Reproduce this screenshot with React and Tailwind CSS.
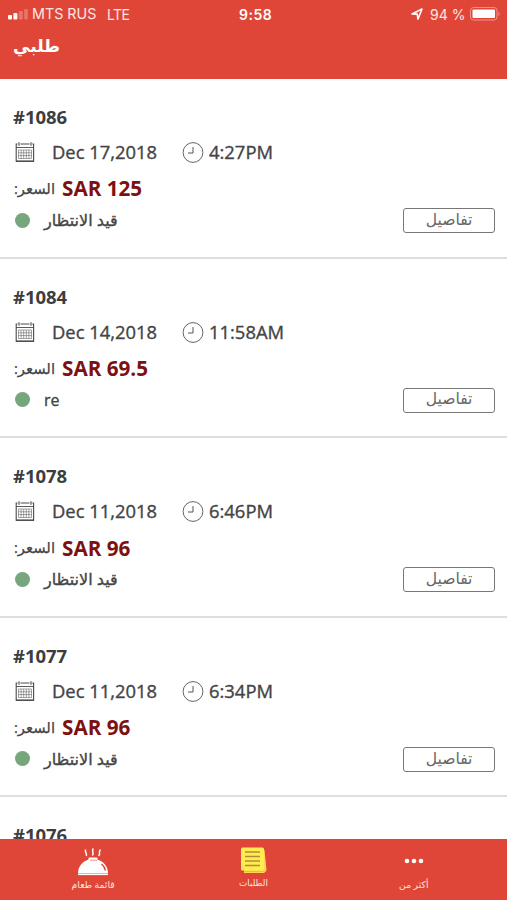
import React from "react";

const orders = [
  { id: "1086", date: "Dec 17,2018", time: "4:27PM", price: "125", status: "قيد الانتظار" },
  { id: "1084", date: "Dec 14,2018", time: "11:58AM", price: "69.5", status: "re" },
  { id: "1078", date: "Dec 11,2018", time: "6:46PM", price: "96", status: "قيد الانتظار" },
  { id: "1077", date: "Dec 11,2018", time: "6:34PM", price: "96", status: "قيد الانتظار" },
];

const CalendarIcon = () => (
  <svg className="h-5 w-5 shrink-0" viewBox="0 0 20 20" fill="none" stroke="#4a4a4a">
    <path d="M2.5 2H1.2v17.2h17.4V2h-1.3M5.500 2h9" strokeWidth="1.1" />
    <path d="M1 5.500h18" strokeWidth="0.9" />
    <path d="M4 0.300v3.400M16 0.300v3.400" strokeWidth="1.100" />
    <path
      d="M3.500 8h13v8.500h-13zM3.500 10.800h13M3.500 13.600h13M6.1 8v8.500M8.7 8v8.500M11.3 8v8.500M13.9 8v8.500"
      strokeWidth="0.5"
    />
    <path d="M1 19.200h18" strokeWidth="1.300" />
  </svg>
);

const ClockIcon = () => (
  <svg className="h-[22px] w-[22px] shrink-0" viewBox="0 0 22 22" fill="none" stroke="#555">
    <circle cx="11" cy="11.500" r="9.9" strokeWidth="0.9" />
    <path d="M11 6v6H6" strokeWidth="1" />
  </svg>
);

const StatusBar = () => (
  <div className="flex h-7 items-center px-2 font-['Inter','Liberation_Sans',sans-serif] text-[14px] text-[#fbe6e2]">
    <div className="flex w-[200px] items-center">
      <svg className="mt-px h-[11px] w-5" viewBox="0 0 20 11" fill="#fff">
        <rect x="0" y="6" width="4" height="4.5" rx="1" />
        <rect x="5.4" y="4" width="4" height="6.5" rx="1" />
        <rect x="10.8" y="2" width="4" height="8.5" rx="1" opacity="0.25" />
        <rect x="16.2" y="0" width="3.6" height="10.5" rx="1" opacity="0.25" />
      </svg>
      <span className="ml-1 w-[75px] text-[14.3px] whitespace-nowrap">MTS RUS</span>
      <span className="tracking-[-0.6px]">LTE</span>
    </div>
    <div className="flex-1 pl-[31px] font-semibold tracking-[0.5px] text-white">9:58</div>
    <svg className="mr-[7px] h-3 w-3" viewBox="0 0 12 12" fill="none" stroke="#fff" strokeWidth="1.6" strokeLinejoin="round">
      <path d="M1 6 11 1 7 11 6.2 6.1z" />
    </svg>
    <span className="w-[40px] whitespace-nowrap">94 %</span>
    <svg className="-mr-[2px] h-[14px] w-[31px]" viewBox="0 0 31 14">
      <rect x="0.5" y="0.5" width="26.500" height="12.500" rx="3" fill="none" stroke="#f0948a" />
      <rect x="2.5" y="2.5" width="22.5" height="8.500" rx="1" fill="#fff" />
      <path d="M28.500 4.8v4.4c1.4-.6 1.4-3.8 0-4.4z" fill="#f0948a" />
    </svg>
  </div>
);

const OrderNumber = ({ id }) => (
  <div className="pt-[26px] text-[18.5px] leading-6 font-bold tracking-[-0.05px] text-[#3d3d3d]">#{id}</div>
);

const OrderCard = ({ order }) => (
  <div className="h-[179.6px] shrink-0 border-b-2 border-[#dedede] pr-3 pl-[13px]">
    <OrderNumber id={order.id} />
    <div className="mt-[11px] flex h-6 items-center text-[18.4px] text-[#444] [-webkit-text-stroke:0.35px_#444]">
      <div className="ml-0.5">
        <CalendarIcon />
      </div>
      <span className="ml-[17px] w-[130px] whitespace-nowrap">{order.date}</span>
      <ClockIcon />
      <span className="ml-[5px]">{order.time}</span>
    </div>
    <div className="mt-3 flex h-6 items-center">
      <span
        dir="rtl"
        className="w-[42px] text-[14.8px] whitespace-nowrap text-[#444] [-webkit-text-stroke:0.25px_#444]"
      >
        السعر:
      </span>
      <span className="mt-0.5 ml-[7px] text-[20.7px] font-bold text-[#7d1010]">SAR {order.price}</span>
    </div>
    <div className="mt-[7px] flex h-[26px] items-center">
      <span className="ml-0.5 h-[15px] w-[15px] rounded-full bg-[#76a67c]"></span>
      <span className="ml-[14px] flex-1 text-[16px] text-[#444] [-webkit-text-stroke:0.35px_#444]">
        {order.status}
      </span>
      <button className="mt-px flex h-[25px] w-[92px] items-center justify-center rounded-[3px] border-[1.5px] border-[#777] pb-0.5 text-[15.6px] text-[#666]">
        تفاصيل
      </button>
    </div>
  </div>
);

const DishIcon = () => (
  <svg className="h-7 w-8" viewBox="0 0 32 28" fill="#fff">
    <path d="M1 25.500c0-7.500 5-12.500 11-14h8c6 1.500 11 6.500 11 14z" />
    <rect x="11.500" y="9.500" width="9" height="3" rx="1" />
    <path d="M1 26.500h30" stroke="#fff" strokeWidth="1.200" />
    <path
      d="M8.500 1.500q-.3 2 .5 3.500t.3 3M16.300.500q-1.200 2-.5 3.500t-.3 3.500M23.500 1.500q-1.500 2-1 3.500t-1 3"
      fill="none"
      stroke="#fff"
      strokeWidth="1.500"
    />
    <path d="M13 12.200h7" stroke="#e04638" strokeWidth="0.600" />
    <path d="M24.500 16q3.200 2.500 3.800 6.500" fill="none" stroke="#e04638" strokeWidth="1.500" />
  </svg>
);

const NotesIcon = () => (
  <svg className="h-[27px] w-[27px]" viewBox="0 0 27 27">
    <path d="M4 3h20.500l2 20.500-2.500 2.500H4z" fill="#ffd84b" />
    <path d="M4 24.500h19.500l2-2" fill="none" stroke="#e8a93c" strokeWidth="0.600" />
    <rect x="1" y="0.500" width="23" height="23" rx="1.500" fill="#ffec50" />
    <path d="M5 5h15M5 9.500h15M5 14h15M5 18.500h15" stroke="#b58a35" strokeWidth="1.400" />
  </svg>
);

const TabBar = () => (
  <div className="flex h-[61px] shrink-0 bg-[#e04638] pr-[13px] pl-[13px] text-[9.3px] leading-3 text-[#ffe4df]">
    <div className="flex flex-1 flex-col items-center pt-[9px]">
      <DishIcon />
      <span className="mt-[3px]">قائمة طعام</span>
    </div>
    <div className="flex flex-1 flex-col items-center pt-2">
      <NotesIcon />
      <span className="mt-[3px] text-[8.8px]">الطلبات</span>
    </div>
    <div className="flex flex-1 flex-col items-center pt-[19px]">
      <svg className="h-[6px] w-5" viewBox="0 0 20 6" fill="#fff">
        <circle cx="3" cy="3" r="2.300" />
        <circle cx="10" cy="3" r="2.300" />
        <circle cx="17" cy="3" r="2.300" />
      </svg>
      <span className="mt-[15px]">أكثر من</span>
    </div>
  </div>
);

const App = () => {
  return (
    <div className="flex h-[900px] w-[507px] flex-col overflow-hidden bg-white font-['Open_Sans','DejaVu_Sans',sans-serif]">
      <div className="h-[79px] shrink-0 bg-[#e04638]">
        <StatusBar />
        <h1 className="pt-1 pl-[13px] text-[17px] leading-7 font-bold text-white">طلبي</h1>
      </div>
      <div className="flex min-h-0 flex-1 flex-col overflow-hidden">
        {orders.map((order) => (
          <OrderCard key={order.id} order={order} />
        ))}
        <div className="pl-[13px]">
          <OrderNumber id="1076" />
        </div>
      </div>
      <TabBar />
    </div>
  );
};

export default App;
